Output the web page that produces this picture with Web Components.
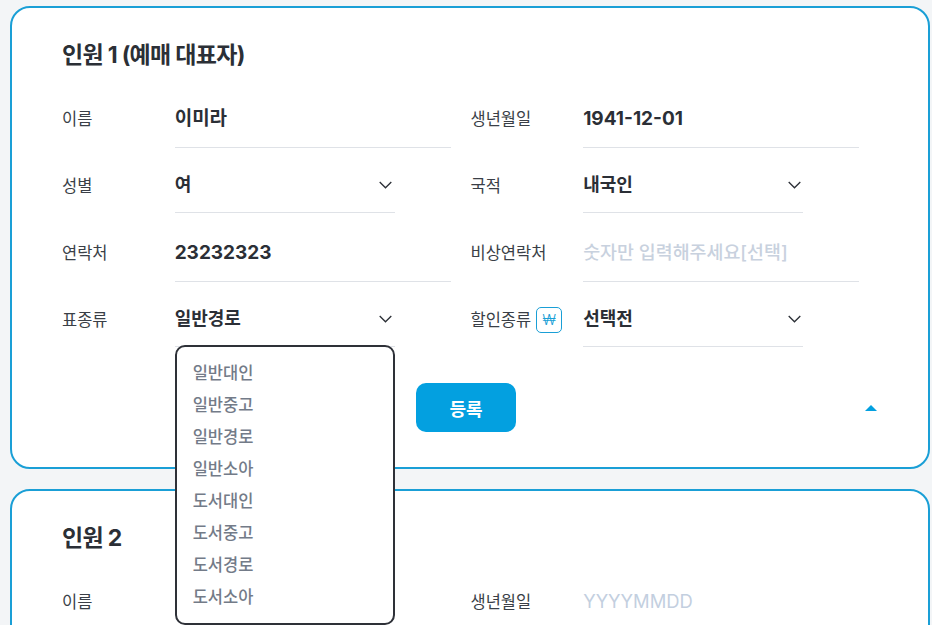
<!DOCTYPE html>
<html lang="ko">
<head>
<meta charset="utf-8">
<title>인원 정보</title>
<style>
    html, body { margin: 0; height: 100%; overflow: hidden; }
    body {
        background: #f3f5f7;
        color: #2b2f36;
        font-family: Inter, "Noto Sans CJK KR", sans-serif;
    }
    .page {
        display: flex;
        flex-direction: column;
        gap: 20px;
        padding: 6px 0 0 10px;
        width: 920px;
    }
</style>
</head>
<body>
<div class="page">
    <passenger-card title="인원 1 (예매 대표자)">
        <form-field label="이름" value="이미라"></form-field>
        <form-field label="생년월일" value="1941-12-01"></form-field>
        <form-field label="성별" value="여" select></form-field>
        <form-field label="국적" value="내국인" select></form-field>
        <form-field label="연락처" value="23232323"></form-field>
        <form-field label="비상연락처" placeholder="숫자만 입력해주세요[선택]"></form-field>
        <form-field label="표종류" value="일반경로" select open>
            <option-menu slot="menu">
                <span>일반대인</span><span>일반중고</span><span>일반경로</span><span>일반소아</span>
                <span>도서대인</span><span>도서중고</span><span>도서경로</span><span>도서소아</span>
            </option-menu>
        </form-field>
        <form-field label="할인종류" value="선택전" select won></form-field>
        <div slot="actions"><submit-button>등록</submit-button></div>
    </passenger-card>
    <passenger-card title="인원 2">
        <form-field label="이름"></form-field>
        <form-field label="생년월일" placeholder="YYYYMMDD" latin></form-field>
    </passenger-card>
</div>

<template id="card-tpl">
    <style>
        :host {
            display: block;
            box-sizing: border-box;
            padding: 32px 50px 35px;
            background: #fff;
            border: 2px solid #1a9fd6;
            border-radius: 20px;
            flex: none;
        }
        h2 {
            margin: 0 0 18px;
            font-size: 23px;
            font-weight: 700;
            line-height: 31px;
            letter-spacing: -0.7px;
            color: #2b2f36;
        }
        .grid {
            display: grid;
            grid-template-columns: repeat(2, 388.5px);
            column-gap: 20px;
            row-gap: 10px;
        }
        .actions {
            display: flex;
            align-items: center;
            justify-content: space-between;
            margin-top: 36px;
            padding-left: 354px;
        }
        .actions.empty { display: none; }
        .caret {
            width: 0;
            height: 0;
            margin-right: 1px;
            border-left: 6px solid transparent;
            border-right: 6px solid transparent;
            border-bottom: 6px solid #03a0e0;
        }
    </style>
    <h2></h2>
    <div class="grid"><slot></slot></div>
    <div class="actions"><slot name="actions"></slot><span class="caret"></span></div>
</template>

<template id="field-tpl">
    <style>
        :host {
            display: flex;
            align-items: stretch;
            position: relative;
            font-size: 16.5px;
        }
        .label {
            flex: none;
            width: 29%;
            display: flex;
            align-items: center;
            gap: 5px;
            color: #3a3f47;
        }
        .text { line-height: 1; padding-top: 1px; }
        .won {
            display: none;
            box-sizing: border-box;
            width: 26px;
            height: 26px;
            align-items: center;
            justify-content: center;
            border: 1px solid #1a9fd6;
            border-radius: 5px;
            color: #1a9fd6;
            font-size: 14.5px;
            font-weight: 300;
        }
        :host([won]) .won { display: flex; }
        .control {
            flex: 1;
            height: 59px;
            box-sizing: border-box;
            display: flex;
            align-items: center;
            justify-content: space-between;
            border-bottom: 1px solid #dfe2e7;
            font-size: 19px;
            font-weight: 700;
            color: #2b2f36;
            padding-bottom: 1px;
        }
        .val { line-height: 1; padding-top: 1px; }
        :host([select]) .control {
            flex: none;
            width: 220px;
            height: 55px;
            font-size: 18px;
        }
        :host([select]) .val { padding-top: 0; }
        .control.hint {
            color: #c8d1de;
            font-weight: 500;
            font-size: 18.4px;
        }
        :host([latin]) .control.hint { font-weight: 400; color: #c3cfdf; }
        svg { display: none; margin-right: 2.5px; }
        :host([select]) svg { display: block; }
        ::slotted([slot="menu"]) {
            position: absolute;
            left: 29%;
            top: 53px;
            z-index: 5;
        }
    </style>
    <div class="label"><span class="text"></span><span class="won">₩</span></div>
    <div class="control">
        <span class="val"></span>
        <svg width="13" height="8" viewBox="0 0 13 8" fill="none" stroke="#2b2f36" stroke-width="1.3"><path d="M.7 1l5.8 5.8L12.300 1"/></svg>
    </div>
    <slot name="menu"></slot>
</template>

<template id="menu-tpl">
    <style>
        :host {
            display: flex;
            flex-direction: column;
            box-sizing: border-box;
            width: 220px;
            height: 280px;
            padding: 10px 16px;
            background: #fff;
            border: 2px solid #2e3138;
            border-radius: 10px;
        }
        ::slotted(span) {
            height: 32px;
            line-height: 32px;
            font-size: 16.5px;
            font-weight: 500;
            color: #737b88;
        }
    </style>
    <slot></slot>
</template>

<template id="button-tpl">
    <style>
        :host {
            display: flex;
            align-items: center;
            justify-content: center;
            width: 100px;
            height: 49px;
            background: #03a0e0;
            border-radius: 10px;
            color: #fff;
            font-size: 18px;
            font-weight: 700;
        }
    </style>
    <slot></slot>
</template>

<script>
// 템플릿을 shadow root 로 복사하는 공통 헬퍼
function stamp(el, id) {
    el.attachShadow({ mode: 'open' });
    el.shadowRoot.appendChild(document.getElementById(id).content.cloneNode(true));
}

class PassengerCard extends HTMLElement {
    constructor() {
        super();
        stamp(this, 'card-tpl');
    }
    connectedCallback() {
        this.shadowRoot.querySelector('h2').textContent = this.getAttribute('title');
        if (!this.querySelector('[slot="actions"]')) {
            this.shadowRoot.querySelector('.actions').classList.add('empty');
        }
    }
}

class FormField extends HTMLElement {
    constructor() {
        super();
        stamp(this, 'field-tpl');
    }
    connectedCallback() {
        const root = this.shadowRoot;
        root.querySelector('.text').textContent = this.getAttribute('label');
        const value = this.getAttribute('value');
        const hint = this.getAttribute('placeholder');
        root.querySelector('.val').textContent = value || hint || '';
        if (!value && hint) root.querySelector('.control').classList.add('hint');
    }
}

class OptionMenu extends HTMLElement {
    constructor() {
        super();
        stamp(this, 'menu-tpl');
    }
}

class SubmitButton extends HTMLElement {
    constructor() {
        super();
        stamp(this, 'button-tpl');
    }
}

customElements.define('passenger-card', PassengerCard);
customElements.define('form-field', FormField);
customElements.define('option-menu', OptionMenu);
customElements.define('submit-button', SubmitButton);
</script>
</body>
</html>
